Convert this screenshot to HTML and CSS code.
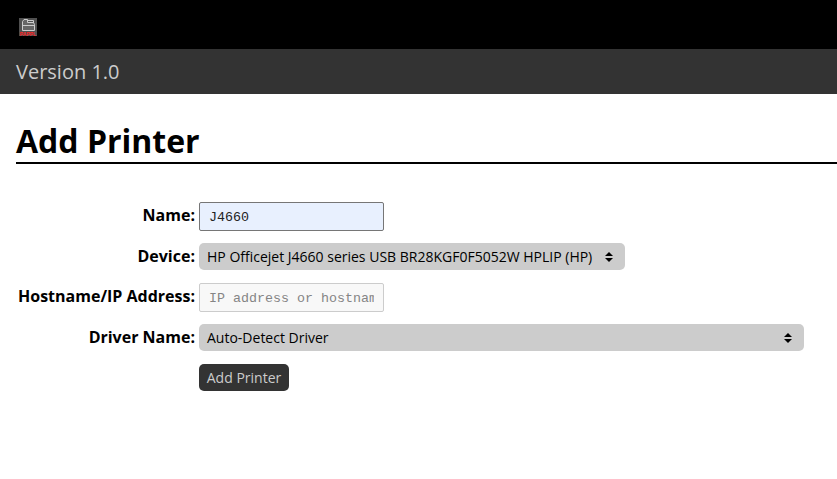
FILE: index.html
```
<!DOCTYPE html>
<html lang="en">
<head>
<meta charset="utf-8">
<title>Add Printer</title>
<link rel="stylesheet" href="styles.css">
</head>
<body>
<header class="topbar">
<svg class="logo" width="18" height="18" viewBox="0 0 18 18"><rect width="18" height="18" fill="#505050"/><path d="M3.500 12.500V3.500L5 1.500H8.500V4.500H14.500L15.500 6.500V12.500Z" fill="#666" stroke="#ccc"/><path d="M4 7.500H15M9 2.500H14.500V5" fill="none" stroke="#ccc"/><text class="logo-text" x="9" y="17.500" text-anchor="middle">PAPPL</text></svg>
</header>
<div class="version">Version 1.0</div>
<main>
<h1>Add Printer</h1>
<form class="form">
<label>Name:</label><input class="name" type="text" value="J4660">
<label>Device:</label><div class="select device"><span>HP Officejet J4660 series USB BR28KGF0F5052W HPLIP (HP)</span><svg width="8" height="10" viewBox="0 0 8 10"><path d="M0 4L4 0L8 4ZM0 6H8L4 10Z"/></svg></div>
<label>Hostname/IP Address:</label><input class="host" type="text" placeholder="IP address or hostname">
<label>Driver Name:</label><div class="select driver"><span>Auto-Detect Driver</span><svg width="8" height="10" viewBox="0 0 8 10"><path d="M0 4L4 0L8 4ZM0 6H8L4 10Z"/></svg></div>
<button type="button">Add Printer</button>
</form>
</main>
</body>
</html>
```
FILE: styles.css
```
* { box-sizing: border-box; }
body { margin: 0; background: #fff; color: #000; font: 16px "Open Sans", sans-serif; overflow: hidden; }
.topbar { height: 49px; background: #000; padding: 18px 19px; }
.logo { display: block; }
.logo-text { font: bold 5px "Liberation Sans", sans-serif; fill: #f22; }
.version { height: 45px; background: #333; color: #ccc; font-size: 20px; line-height: 45px; padding-left: 16px; }
main { padding: 27px 0 0 16px; }
h1 { margin: 0; font-size: 32px; line-height: 40px; height: 43px; border-bottom: 2px solid #000; }
.form { display: grid; grid-template-columns: 179px 605px; column-gap: 4px; grid-template-rows: 29px 27px 29px 27px 27px; row-gap: 12.4px; margin-top: 38px; align-items: center; }
label { text-align: right; font-weight: 700; line-height: 22px; padding-bottom: 2.2px; white-space: nowrap; }
input { width: 185px; height: 29px; padding: 2px 9px 0; border: 1px solid #767676; border-radius: 2px; font: 13.333px "Liberation Mono", monospace; color: #222; }
.name { background: #e8f0fe; }
.host { background: #f8f8f8; border-color: #ccc; }
.host::placeholder { color: #858585; }
.select { height: 27px; background: #ccc; border-radius: 5px; padding: 0 12px 0 8px; display: flex; align-items: center; justify-content: space-between; font-size: 14px; white-space: nowrap; }
.device { width: 426px; }
button { grid-column: 2; width: 90px; height: 27px; padding: 0; border: 0; border-radius: 5px; background: #333; color: #ccc; font: 14px "Open Sans", sans-serif; }
```
